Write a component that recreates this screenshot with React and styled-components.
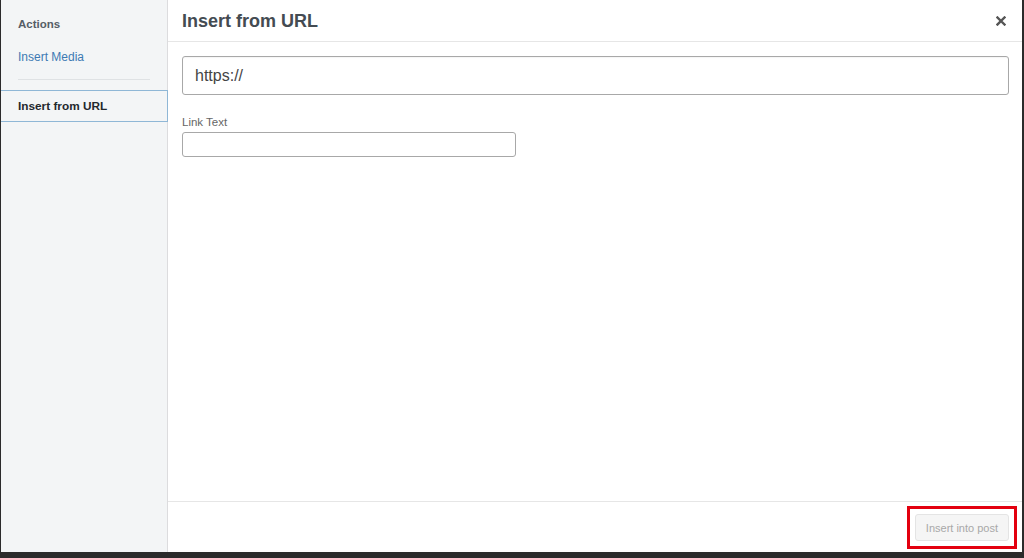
import React from "react";
import styled, { createGlobalStyle } from "styled-components";

const Global = createGlobalStyle`
  html, body { margin: 0; padding: 0; background: #2b2b2b; }
  body { font-family: "Liberation Sans", Arial, sans-serif; }
  #root { height: 558px; }
  * { box-sizing: border-box; }
`;

const Frame = styled.div`
  width: 1024px;
  height: 558px;
  padding: 0 2px 6px 1px;
  background: #2b2b2b;
`;

const Modal = styled.div`
  display: flex;
  height: 100%;
  background: #fff;
`;

const Sidebar = styled.nav`
  width: 167px;
  flex: none;
  background: #f3f5f6;
  border-right: 1px solid #dcdcde;
  display: flex;
  flex-direction: column;
  padding-top: 16px;
`;

const SideHeading = styled.h3`
  margin: 0 0 0 17px;
  font-size: 11.5px;
  font-weight: bold;
  color: #555d66;
  line-height: 16px;
`;

const SideLink = styled.a`
  display: block;
  margin: 16px 0 0 17px;
  font-size: 12px;
  line-height: 18px;
  color: #3d7ab3;
  text-decoration: none;
`;

const Separator = styled.div`
  height: 1px;
  background: #dfe2e4;
  margin: 13px 17px 10px 17px;
`;

const SideItem = styled.div`
  margin-right: -1px;
  border-top: 1px solid #8fb7d6;
  border-bottom: 1px solid #8fb7d6;
  border-right: 1px solid #8fb7d6;
  background: #f3f5f6;
  padding: 7px 0 7px 17px;
  font-size: 11.8px;
  font-weight: bold;
  line-height: 16px;
  color: #23282d;
`;

const Main = styled.section`
  flex: 1;
  display: flex;
  flex-direction: column;
  min-width: 0;
`;

const Header = styled.header`
  height: 42px;
  border-bottom: 1px solid #e6e6e6;
  display: flex;
  align-items: center;
  justify-content: space-between;
  padding: 0 14px 0 14px;
`;

const Title = styled.h1`
  margin: 0;
  font-size: 18px;
  font-weight: bold;
  color: #444b52;
  line-height: 24px;
`;

const Close = styled.button`
  border: 0;
  background: none;
  padding: 0;
  width: 14px;
  height: 14px;
  display: flex;
  align-items: center;
  justify-content: center;
  cursor: pointer;
`;

const Body = styled.div`
  flex: 1;
  padding: 14px 13px 0 14px;
  display: flex;
  flex-direction: column;
`;

const UrlInput = styled.input`
  width: 100%;
  height: 39px;
  border: 1px solid #a8a8a8;
  border-radius: 3px;
  padding: 0 12px;
  font-family: "Liberation Sans", Arial, sans-serif;
  font-size: 16px;
  color: #444;
  outline: none;
  box-shadow: inset 0 1px 1px rgba(0,0,0,0.04);
`;

const Label = styled.label`
  margin-top: 20px;
  font-size: 11.5px;
  color: #666;
  line-height: 14px;
`;

const TextInput = styled.input`
  margin-top: 3px;
  width: 334px;
  height: 25px;
  border: 1px solid #a8a8a8;
  border-radius: 3px;
  padding: 0 6px;
  font-family: "Liberation Sans", Arial, sans-serif;
  font-size: 13px;
  outline: none;
`;

const Footer = styled.footer`
  height: 51px;
  border-top: 1px solid #e6e6e6;
  display: flex;
  justify-content: flex-end;
  align-items: flex-start;
  padding: 4px 5px 0 0;
`;

const Highlight = styled.div`
  border: 3px solid #e3000f;
  padding: 5px;
`;

const Button = styled.button`
  height: 27px;
  padding: 0 10px;
  border: 1px solid #e4e4e4;
  border-radius: 3px;
  background: #f5f5f5;
  color: #a8a8a8;
  font-family: "Liberation Sans", Arial, sans-serif;
  font-size: 11px;
  cursor: default;
`;

export default function App() {
  return (
    <>
      <Global />
      <Frame>
        <Modal>
          <Sidebar>
            <SideHeading>Actions</SideHeading>
            <SideLink href="#">Insert Media</SideLink>
            <Separator />
            <SideItem>Insert from URL</SideItem>
          </Sidebar>
          <Main>
            <Header>
              <Title>Insert from URL</Title>
              <Close aria-label="Close">
                <svg width="10" height="10" viewBox="0 0 10 10">
                  <path d="M1.5 1.5 L8.5 8.5 M8.5 1.5 L1.5 8.5" stroke="#555" strokeWidth="2.4" strokeLinecap="square" />
                </svg>
              </Close>
            </Header>
            <Body>
              <UrlInput defaultValue="https://" />
              <Label>Link Text</Label>
              <TextInput />
            </Body>
            <Footer>
              <Highlight>
                <Button disabled>Insert into post</Button>
              </Highlight>
            </Footer>
          </Main>
        </Modal>
      </Frame>
    </>
  );
}
